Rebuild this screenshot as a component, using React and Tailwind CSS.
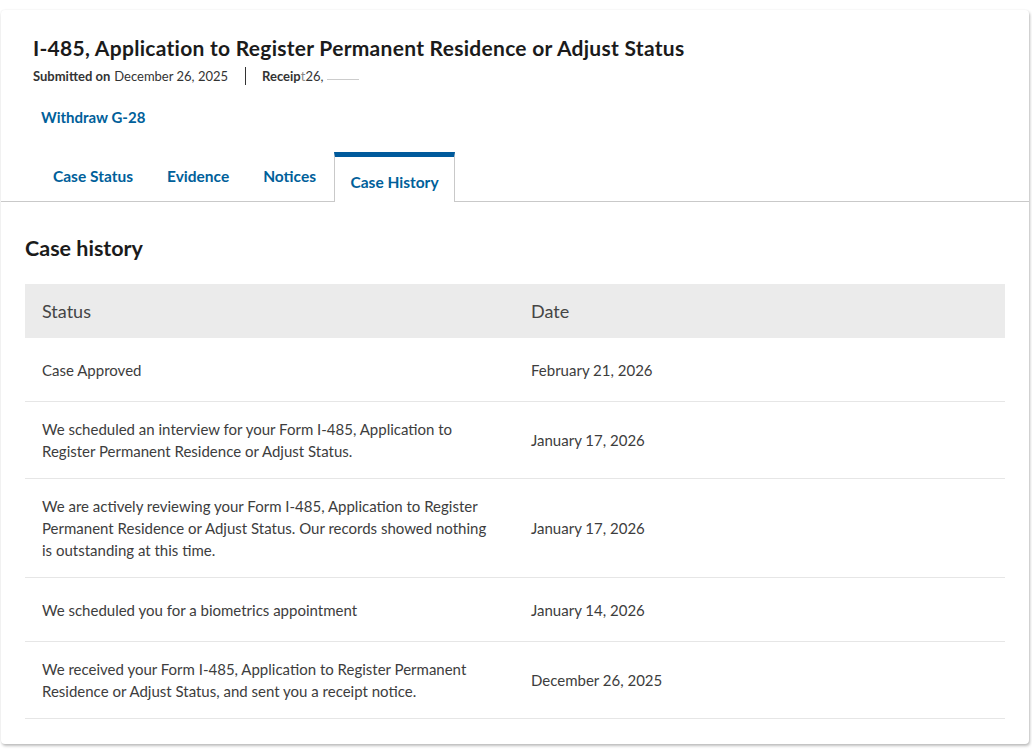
const rows = [
  { status: "Case Approved", date: "February 21, 2026" },
  {
    status: (
      <>
        We scheduled an interview for your Form I-485, Application to
        <br />
        Register Permanent Residence or Adjust Status.
      </>
    ),
    date: "January 17, 2026",
  },
  {
    status: (
      <>
        We are actively reviewing your Form I-485, Application to Register
        <br />
        Permanent Residence or Adjust Status. Our records showed nothing
        <br />
        is outstanding at this time.
      </>
    ),
    date: "January 17, 2026",
  },
  { status: "We scheduled you for a biometrics appointment", date: "January 14, 2026" },
  {
    status: (
      <>
        We received your Form I-485, Application to Register Permanent
        <br />
        Residence or Adjust Status, and sent you a receipt notice.
      </>
    ),
    date: "December 26, 2025",
  },
];

const tabs = ["Case Status", "Evidence", "Notices"];

export default function App() {
  return (
    <div
      className="min-h-[754px] bg-white pl-[1px] pr-[3px] pt-[10px] text-[#1b1b1b]"
      style={{ fontFamily: "Lato, 'Liberation Sans', sans-serif" }}
    >
      <div className="h-[734px] rounded-[4px] bg-white shadow-[1px_2px_3px_rgba(0,0,0,0.25),0_0_2px_rgba(0,0,0,0.08)]">
        <div className="px-8 pt-[25px]">
          <h1 className="text-[21px] font-bold leading-[26px] tracking-[0.28px]">
            I-485, Application to Register Permanent Residence or Adjust Status
          </h1>
          <div className="mt-[6px] flex items-center text-[13px] leading-[18px] text-[#333]">
            <span className="font-bold">Submitted on</span>
            <span className="ml-1">December 26, 2025</span>
            <span className="ml-[17px] mr-4 h-[18px] w-px bg-[#333]" />
            <span className="font-bold">Receip</span>
            <span className="text-[#888]">t</span>
            <span>26,</span>
            <span className="ml-1 mt-[6px] h-px w-[32px] bg-[#ccc]" />
          </div>
          <a className="ml-2 mt-[22px] inline-block text-[15px] font-bold leading-[20px] text-[#00609a]">
            Withdraw G-28
          </a>
        </div>
        <div className="mt-[23px] flex items-end border-b border-[#c9c9c9] pl-[35px]">
          {tabs.map((t) => (
            <button
              key={t}
              className="px-[17px] pb-[15px] text-[15.5px] font-bold leading-[20px] text-[#00609a]"
              type="button"
            >
              {t}
            </button>
          ))}
          <button
            className="relative -mb-px ml-[1px] h-[50px] w-[121px] border-x border-t-[5px] border-[#c9c9c9] border-t-[#005a9c] bg-white pt-[5px] text-[15.5px] font-bold leading-[20px] text-[#00609a]"
            type="button"
          >
            Case History
          </button>
        </div>
        <div className="px-6">
          <h2 className="mt-[33px] text-[21.5px] font-bold leading-[26px]">Case history</h2>
          <div className="mt-[23px]">
            <div className="flex h-[54px] items-center bg-[#ebebeb] text-[18px] text-[#454545]">
              <div className="w-[506px] pl-[17px]">Status</div>
              <div>Date</div>
            </div>
            {rows.map((r, i) => (
              <div
                key={i}
                className="flex min-h-[64px] items-center border-b border-[#e6e6e6] py-4 text-[15px] leading-[22px] text-[#3d3d3d]"
              >
                <div className="w-[506px] pl-[17px]">{r.status}</div>
                <div>{r.date}</div>
              </div>
            ))}
          </div>
        </div>
      </div>
    </div>
  );
}
